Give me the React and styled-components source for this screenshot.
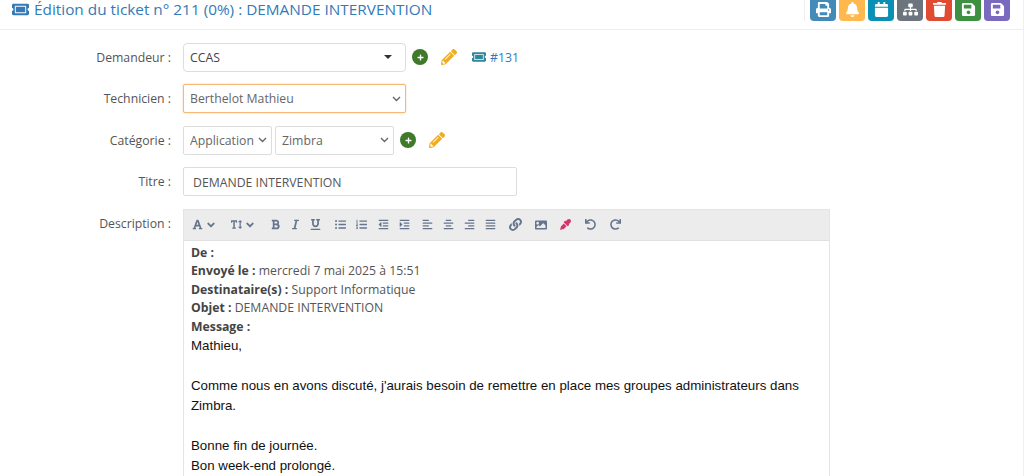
import styled, { createGlobalStyle } from "styled-components";
import {
  FaPrint, FaBell, FaCalendar, FaSitemap, FaTrash, FaSave, FaTicketAlt, FaPlus, FaPencilAlt,
  FaFont, FaTextHeight, FaBold, FaItalic, FaUnderline, FaListUl, FaListOl, FaOutdent, FaIndent,
  FaAlignLeft, FaAlignCenter, FaAlignRight, FaAlignJustify, FaLink, FaImage, FaEyeDropper, FaUndo, FaRedo,
  FaAngleDown,
} from "react-icons/fa";

const Global = createGlobalStyle`
  html, body, #root { margin: 0; height: 100%; overflow: hidden; background: #fff; }
  body { font-family: "Open Sans", "Liberation Sans", sans-serif; font-size: 12.25px; color: #495057; }
  * { box-sizing: border-box; }
`;

const Page = styled.div`
  height: 100%;
  border-right: 1px solid #f0f0f0;
`;

const Header = styled.div`
  height: 30px;
  display: flex;
  justify-content: space-between;
  align-items: flex-start;
  border-bottom: 1px solid #eee;
  padding: 0 13px 0 12px;
  overflow: hidden;
`;

const Title = styled.div`
  display: flex;
  align-items: center;
  gap: 5px;
  height: 18px;
  line-height: 18px;
  font-size: 15.35px;
  color: #337ab7;
  white-space: nowrap;
`;

const Actions = styled.div`
  display: flex;
  gap: 3px;
  padding-left: 5px;
  border-left: 1px solid #eee;
`;

const ActionButton = styled.div`
  width: 26px;
  height: 21px;
  border-radius: 0 0 4px 4px;
  background: ${(p) => p.$bg};
  color: #fff;
  display: flex;
  align-items: center;
  justify-content: center;
  font-size: 15px;
  svg { display: block; margin-top: -3px; }
`;

const Form = styled.div`
  padding-top: 12.5px;
  display: flex;
  flex-direction: column;
  gap: 12.5px;
`;

const Row = styled.div`
  display: grid;
  grid-template-columns: 171px 1fr;
  column-gap: 12px;
  align-items: ${(p) => (p.$top ? "start" : "center")};
`;

const Label = styled.div`
  text-align: right;
  color: #555;
  white-space: nowrap;
  padding-top: ${(p) => (p.$top ? "6px" : "0")};
`;

const Field = styled.div`
  display: flex;
  align-items: center;
  min-height: 29px;
`;

const ComboBox = styled.div`
  width: 223px;
  height: 29px;
  border: 1px solid #ddd;
  border-radius: 4px;
  display: flex;
  align-items: center;
  justify-content: space-between;
  padding: 0 13px 0 6px;
  color: #444;
`;

const Caret = styled.span`
  width: 0;
  height: 0;
  border-left: 4.5px solid transparent;
  border-right: 4.5px solid transparent;
  border-top: 4px solid #333;
`;

const Select = styled.select`
  appearance: none;
  width: ${(p) => p.$w}px;
  height: 29px;
  margin: 0 ${(p) => p.$mr || 0}px 0 0;
  border: 1px solid ${(p) => (p.$focus ? "#f8b878" : "#ddd")};
  box-shadow: ${(p) => (p.$focus ? "0 0 2px rgba(245,160,80,.6)" : "none")};
  border-radius: 2px;
  background: #fff url("data:image/svg+xml,%3Csvg xmlns='http://www.w3.org/2000/svg' width='9' height='6'%3E%3Cpath d='M1 1l3.5 3.5L8 1' fill='none' stroke='%23666' stroke-width='1.4'/%3E%3C/svg%3E") no-repeat right 4px center;
  padding: 0 0 0 6px;
  font-family: inherit;
  font-size: 12.25px;
  color: #666;
`;

const AddIcon = styled.span`
  width: 16px;
  height: 16px;
  border-radius: 50%;
  background: #3f7a2b;
  color: #fff;
  display: inline-flex;
  align-items: center;
  justify-content: center;
  margin-left: ${(p) => p.$ml}px;
  font-size: 7px;
`;

const PencilIcon = styled.span`
  display: inline-flex;
  margin-left: ${(p) => p.$ml}px;
  color: #f0ad1e;
  font-size: 16px;
`;

const TicketLink = styled.span`
  display: inline-flex;
  align-items: center;
  gap: 4px;
  margin-left: 15px;
  svg { color: #31859c; font-size: 14px; }
  b { font-weight: 400; color: #337ab7; }
`;

const TextInput = styled.div`
  width: 334px;
  height: 29px;
  border: 1px solid #ddd;
  border-radius: 2px;
  display: flex;
  align-items: center;
  padding: 1px 0 0 9px;
  color: #555;
`;

const Editor = styled.div`
  width: 647px;
  border: 1px solid #e4e4e4;
  border-bottom: 0;
`;

const Toolbar = styled.div`
  height: 31px;
  background: #ececec;
  border-bottom: 1px solid #e0e0e0;
  display: flex;
  align-items: center;
  padding-left: 4px;
`;

const Tool = styled.span`
  width: ${(p) => p.$w}px;
  margin-left: ${(p) => p.$ml || 0}px;
  display: inline-flex;
  align-items: center;
  justify-content: center;
  gap: 2px;
  font-size: ${(p) => p.$size || 11}px;
  color: ${(p) => p.$color || "#66758d"};
  svg + svg { font-size: 12px; }
`;

const Body = styled.div`
  padding: 3px 7px 0;
`;

const MetaLine = styled.div`
  line-height: 18.5px;
  color: #555;
  b { font-weight: 700; color: #444; }
`;

const MailLine = styled.div`
  font-family: "Liberation Sans", Arial, sans-serif;
  font-size: 13.3px;
  line-height: 20px;
  min-height: 20px;
  color: #111;
`;

const buttons = [
  { bg: "#428bb9", icon: <FaPrint /> },
  { bg: "#ffb84d", icon: <FaBell /> },
  { bg: "#0a8fb5", icon: <FaCalendar /> },
  { bg: "#6c757d", icon: <FaSitemap /> },
  { bg: "#e04b32", icon: <FaTrash /> },
  { bg: "#3f9142", icon: <FaSave /> },
  { bg: "#7a6abf", icon: <FaSave /> },
];

export default function App() {
  return (
    <Page>
      <Global />
      <Header>
        <Title>
          <FaTicketAlt size={17} />
          <span>Édition du ticket n° 211 (0%) : DEMANDE INTERVENTION</span>
        </Title>
        <Actions>
          {buttons.map((b, i) => (
            <ActionButton key={i} $bg={b.bg}>{b.icon}</ActionButton>
          ))}
        </Actions>
      </Header>
      <Form>
        <Row>
          <Label>Demandeur :</Label>
          <Field>
            <ComboBox>CCAS<Caret /></ComboBox>
            <AddIcon $ml={6}><FaPlus /></AddIcon>
            <PencilIcon $ml={13}><FaPencilAlt /></PencilIcon>
            <TicketLink><FaTicketAlt /><b>#131</b></TicketLink>
          </Field>
        </Row>
        <Row>
          <Label>Technicien :</Label>
          <Field>
            <Select $w={223} $focus><option>Berthelot Mathieu</option></Select>
          </Field>
        </Row>
        <Row>
          <Label>Catégorie :</Label>
          <Field>
            <Select $w={89} $mr={3}><option>Application</option></Select>
            <Select $w={119}><option>Zimbra</option></Select>
            <AddIcon $ml={6}><FaPlus /></AddIcon>
            <PencilIcon $ml={13}><FaPencilAlt /></PencilIcon>
          </Field>
        </Row>
        <Row>
          <Label>Titre :</Label>
          <Field><TextInput>DEMANDE INTERVENTION</TextInput></Field>
        </Row>
        <Row $top>
          <Label $top>Description :</Label>
          <Editor>
            <Toolbar>
              <Tool $w={33}><FaFont /><FaAngleDown /></Tool>
              <Tool $w={44.5}><FaTextHeight /><FaAngleDown /></Tool>
              <Tool $w={20}><FaBold /></Tool>
              <Tool $w={20}><FaItalic /></Tool>
              <Tool $w={20}><FaUnderline /></Tool>
              <Tool $w={21.5} $ml={3.75}><FaListUl /></Tool>
              <Tool $w={21.5}><FaListOl /></Tool>
              <Tool $w={21.5}><FaOutdent /></Tool>
              <Tool $w={21.5}><FaIndent /></Tool>
              <Tool $w={21} $ml={1.75}><FaAlignLeft /></Tool>
              <Tool $w={21}><FaAlignCenter /></Tool>
              <Tool $w={21}><FaAlignRight /></Tool>
              <Tool $w={21}><FaAlignJustify /></Tool>
              <Tool $w={25} $ml={2} $size={13}><FaLink /></Tool>
              <Tool $w={25} $size={12}><FaImage /></Tool>
              <Tool $w={25} $color="#d6336c"><FaEyeDropper /></Tool>
              <Tool $w={25}><FaUndo /></Tool>
              <Tool $w={25}><FaRedo /></Tool>
            </Toolbar>
            <Body>
              <MetaLine><b>De :</b></MetaLine>
              <MetaLine><b>Envoyé le :</b> mercredi 7 mai 2025 à 15:51</MetaLine>
              <MetaLine><b>Destinataire(s) :</b> Support Informatique</MetaLine>
              <MetaLine><b>Objet :</b> DEMANDE INTERVENTION</MetaLine>
              <MetaLine><b>Message :</b></MetaLine>
              <MailLine>Mathieu,</MailLine>
              <MailLine />
              <MailLine>Comme nous en avons discuté, j'aurais besoin de remettre en place mes groupes administrateurs dans Zimbra.</MailLine>
              <MailLine />
              <MailLine>Bonne fin de journée.</MailLine>
              <MailLine>Bon week-end prolongé.</MailLine>
            </Body>
          </Editor>
        </Row>
      </Form>
    </Page>
  );
}
